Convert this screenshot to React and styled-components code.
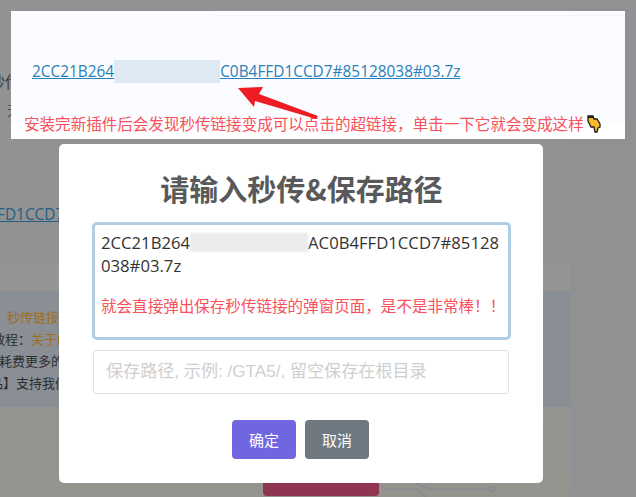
import React from "react";
import styled, { createGlobalStyle } from "styled-components";

const GlobalStyle = createGlobalStyle`
  html, body {
    margin: 0;
    padding: 0;
    overflow: hidden;
  }
  body {
    font-family: "Open Sans", "Noto Sans CJK SC", sans-serif;
  }
`;

const Page = styled.div`
  position: relative;
  width: 636px;
  height: 497px;
  overflow: hidden;
  display: flex;
  background: #909193;
`;

const BackColumn = styled.div`
  width: 570px;
  display: flex;
  flex-direction: column;
`;

const TopBand = styled.div`
  height: 265px;
  box-sizing: border-box;
  padding-top: 73px;
  background: #929292;
  display: flex;
  flex-direction: column;
`;

const HeaderLabel = styled.div`
  margin-left: -11px;
  font-size: 16px;
  line-height: 18px;
  color: #3c3c3c;
  white-space: nowrap;
`;

const SubLabel = styled.div`
  margin: 11px 0 0 7px;
  font-size: 13px;
  line-height: 16px;
  color: #4a4a4a;
`;

const HashLink = styled.div`
  margin: 87px 0 0 -3px;
  font-size: 15.4px;
  line-height: 20px;
  color: #235f86;
  text-decoration: underline;
  white-space: nowrap;
`;

const LowerBand = styled.div`
  flex: 1;
  padding-top: 26px;
  background: linear-gradient(#959595, #95938e);
  display: flex;
  flex-direction: column;
`;

const Notice = styled.div`
  height: 116px;
  box-sizing: border-box;
  padding-top: 15px;
  background: #8a8f96;
  display: flex;
  flex-direction: column;
`;

const NoticeRow = styled.div`
  margin-left: ${props => props.$indent}px;
  font-size: 13px;
  line-height: 22px;
  color: #2e2e2e;
  white-space: nowrap;
`;

const Hint = styled.span`
  color: #a06c20;
`;

const BottomRow = styled.div`
  margin-top: auto;
  height: 27px;
  padding-left: 263px;
  display: flex;
`;

const PinkButton = styled.div`
  width: 116px;
  height: 26px;
  border-radius: 4px;
  background: #8f3552;
`;

const Circuit = styled.svg`
  margin: 8px 0 0 1px;
`;

const SideShade = styled.div`
  flex: 1;
  background: #909193;
`;

const Snapshot = styled.div`
  position: absolute;
  left: 11px;
  top: 11px;
  width: 614px;
  height: 128px;
  box-sizing: border-box;
  padding: 4px 0 0 21px;
  background: linear-gradient(#fbfcff 113px, #fff 113px);
  display: flex;
  flex-direction: column;
`;

const FaintLine = styled.div`
  height: 1px;
  margin-left: 183px;
  background: #f3f4f7;
`;

const FileLink = styled.div`
  margin-top: 44px;
  font-size: 15.4px;
  line-height: 22px;
  color: #2a80b9;
  text-decoration: underline;
  white-space: nowrap;
  display: flex;
  align-items: center;
`;

const BlurLink = styled.span`
  flex: none;
  width: 106px;
  height: 23px;
  background: #dfe9f3;
  filter: blur(0.5px);
`;

const RedNote = styled.div`
  font-family: "Noto Sans CJK SC", sans-serif;
  font-size: 15.55px;
  line-height: 20px;
  color: #f8505c;
  white-space: nowrap;
  display: flex;
  align-items: center;
  margin: ${props => props.$margin};
`;

const Arrow = styled.svg`
  position: absolute;
  left: 226px;
  top: 74px;
`;

const Hand = styled.svg`
  flex: none;
  margin: 2px 0 0 3px;
`;

const Modal = styled.div`
  position: absolute;
  left: 59px;
  top: 144px;
  width: 484px;
  height: 339px;
  box-sizing: border-box;
  padding: 26px 32px 0 33px;
  border-radius: 5px;
  background: #fff;
  display: flex;
  flex-direction: column;
`;

const Title = styled.h2`
  margin: 0 0 15px;
  text-align: center;
  font-family: "Noto Sans CJK SC", sans-serif;
  font-size: 29px;
  line-height: 37px;
  font-weight: 700;
  color: #595959;
`;

const PasteArea = styled.div`
  box-sizing: border-box;
  width: 419px;
  height: 118px;
  padding: 6px 6px 0;
  border: 3px solid #b0cde6;
  border-radius: 5px;
  font-size: 16.7px;
  line-height: 23px;
  color: #333;
`;

const PasteLine = styled.div`
  display: flex;
  align-items: center;
  white-space: nowrap;
`;

const BlurText = styled.span`
  flex: none;
  width: 118px;
  height: 19px;
  background: #ebebeb;
  filter: blur(1px);
`;

const PathInput = styled.div`
  box-sizing: border-box;
  width: 416px;
  height: 44px;
  margin: 10px 0 0 1px;
  padding: 0 12px;
  border: 1px solid #e2e2e2;
  border-radius: 3px;
  font-family: "Liberation Sans", "Noto Sans CJK SC", sans-serif;
  font-size: 17.1px;
  line-height: 42px;
  color: #cfcfcf;
  white-space: nowrap;
`;

const Actions = styled.div`
  display: flex;
  justify-content: center;
  gap: 9px;
  margin: 26px 2px 0 0;
`;

const Button = styled.button`
  width: 64px;
  height: 39px;
  padding: 0;
  border: none;
  border-radius: 4px;
  background: ${props => props.$bg};
  color: #fff;
  font-family: "Noto Sans CJK SC", sans-serif;
  font-size: 15px;
`;

export default function App() {
  return (
    <Page>
      <GlobalStyle />
      <BackColumn>
        <TopBand>
          <HeaderLabel>秒传</HeaderLabel>
          <SubLabel>无</SubLabel>
          <HashLink>FD1CCD7#85128038</HashLink>
        </TopBand>
        <LowerBand>
          <Notice>
            <NoticeRow $indent={7}>
              <Hint>秒传链接仅</Hint>
            </NoticeRow>
            <NoticeRow $indent={-8}>
              教程：<Hint>关于解</Hint>
            </NoticeRow>
            <NoticeRow $indent={-1}>耗费更多的</NoticeRow>
            <NoticeRow $indent={-10}>品】支持我们</NoticeRow>
          </Notice>
          <BottomRow>
            <PinkButton />
            <Circuit width="120" height="19" viewBox="0 0 120 19">
              <path
                d="M4 11 H36 L46 19 M36 5 L48 11 H109"
                stroke="#868a90"
                strokeWidth="1.5"
                fill="none"
              />
              <circle cx="112" cy="11" r="2.6" fill="none" stroke="#868a90" strokeWidth="1.3" />
            </Circuit>
          </BottomRow>
        </LowerBand>
      </BackColumn>
      <SideShade />

      <Snapshot>
        <FaintLine />
        <FileLink>
          2CC21B264
          <BlurLink />
          C0B4FFD1CCD7#85128038#03.7z
        </FileLink>
        <RedNote $margin="30px 0 0 -8px">
          安装完新插件后会发现秒传链接变成可以点击的超链接，单击一下它就会变成这样
          <Hand width="14" height="18" viewBox="0 0 14 18">
            <path
              d="M1 1 H6 L7 4 H10 L13 9 V12 L11 13 L10 17 H8 L7 12 H4 L1 6 Z"
              fill="#fbb827"
              stroke="#1d1d1d"
              strokeWidth="1.3"
              strokeLinejoin="miter"
            />
            <path d="M1 1 H6 V3 H1 Z" fill="#1d1d1d" />
          </Hand>
        </RedNote>
      </Snapshot>
      <Arrow width="95" height="46" viewBox="0 0 95 46">
        <path d="M12 14 L37 13 L33 20 L92 42 L90 45 L29 27 L28 33 Z" fill="#ee1c25" />
      </Arrow>

      <Modal>
        <Title>请输入秒传&amp;保存路径</Title>
        <PasteArea>
          <PasteLine>
            2CC21B264
            <BlurText />
            AC0B4FFD1CCD7#85128
          </PasteLine>
          <div>038#03.7z</div>
          <RedNote $margin="18px 0 0">
            就会直接弹出保存秒传链接的弹窗页面，是不是非常棒！！
          </RedNote>
        </PasteArea>
        <PathInput>保存路径, 示例: /GTA5/, 留空保存在根目录</PathInput>
        <Actions>
          <Button $bg="#7066e0">确定</Button>
          <Button $bg="#6e7881">取消</Button>
        </Actions>
      </Modal>
    </Page>
  );
}
